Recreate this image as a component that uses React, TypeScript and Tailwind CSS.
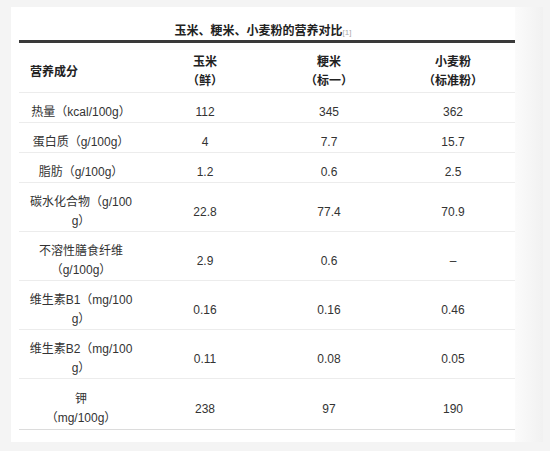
import React from "react";

type Row = { name: React.ReactNode; corn: string; rice: string; wheat: string };

const rows: Row[] = [
  { name: "热量（kcal/100g）", corn: "112", rice: "345", wheat: "362" },
  { name: "蛋白质（g/100g）", corn: "4", rice: "7.7", wheat: "15.7" },
  { name: "脂肪（g/100g）", corn: "1.2", rice: "0.6", wheat: "2.5" },
  { name: <>碳水化合物（g/100<br />g）</>, corn: "22.8", rice: "77.4", wheat: "70.9" },
  { name: <>不溶性膳食纤维<br />（g/100g）</>, corn: "2.9", rice: "0.6", wheat: "–" },
  { name: <>维生素B1（mg/100<br />g）</>, corn: "0.16", rice: "0.16", wheat: "0.46" },
  { name: <>维生素B2（mg/100<br />g）</>, corn: "0.11", rice: "0.08", wheat: "0.05" },
  { name: <>钾<br />（mg/100g）</>, corn: "238", rice: "97", wheat: "190" },
];

export default function App() {
  return (
    <div
      className="w-[550px] h-[451px] bg-[#f4f4f4] pt-[7px] pl-[11px] overflow-hidden"
      style={{ fontFamily: '"Liberation Sans", "Noto Sans CJK SC", sans-serif' }}
    >
      <div className="flex h-[435px] w-[532px]">
        <div className="w-[504px] bg-white px-[8px]">
          <div className="h-[33px] pt-[16px] text-center text-[12px] leading-[17px] font-bold text-[#222]">
            玉米、粳米、小麦粉的营养对比
            <span className="text-[8px] font-normal text-[#aaa] align-baseline">[1]</span>
          </div>
          <table className="w-[496px] table-fixed border-collapse border-t-[3px] border-[#3a3a3a] text-[12px] leading-[19px] text-[#333]">
            <colgroup>
              <col className="w-[124px]" />
              <col className="w-[124px]" />
              <col className="w-[124px]" />
              <col className="w-[124px]" />
            </colgroup>
            <thead>
              <tr className="border-b border-[#ececec] text-[#222]">
                <th className="pt-[10px] pb-[1px] pl-[11px] text-left font-bold">营养成分</th>
                <th className="pt-[10px] pb-[1px] text-center font-bold">玉米<br />（鲜）</th>
                <th className="pt-[10px] pb-[1px] text-center font-bold">粳米<br />（标一）</th>
                <th className="pt-[10px] pb-[1px] text-center font-bold">小麦粉<br />（标准粉）</th>
              </tr>
            </thead>
            <tbody>
              {rows.map((r, i) => {
                const last = i === rows.length - 1;
                const pad = last ? "pt-[11px] pb-[1px]" : "pt-[10px] pb-0";
                return (
                  <tr key={i} className={last ? "border-b border-[#dcdcdc]" : "border-b border-[#ececec]"}>
                    <td className={`${pad} px-[8px] text-center`}>{r.name}</td>
                    <td className={`${pad} text-center`}>{r.corn}</td>
                    <td className={`${pad} text-center`}>{r.rice}</td>
                    <td className={`${pad} text-center`}>{r.wheat}</td>
                  </tr>
                );
              })}
            </tbody>
          </table>
        </div>
        <div className="w-[28px] bg-gradient-to-r from-[#fbfbfb] to-[#f1f1f1]" />
      </div>
    </div>
  );
}
